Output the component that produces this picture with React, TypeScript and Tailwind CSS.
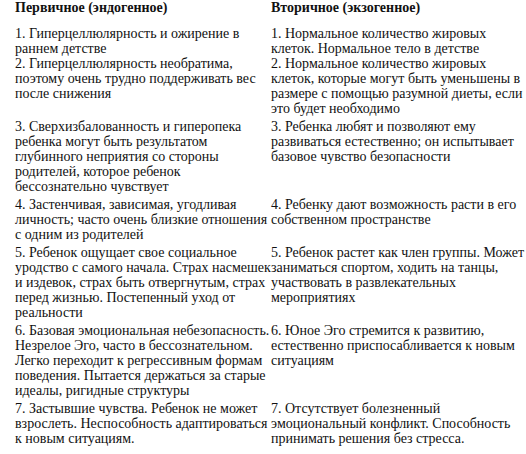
import React from "react";

type Row = { left: string[]; right: string[] };

const rows: Row[] = [
  {
    left: [
      "1. Гиперцеллюлярность и ожирение в",
      "раннем детстве",
      "2. Гиперцеллюлярность необратима,",
      "поэтому очень трудно поддерживать вес",
      "после снижения",
    ],
    right: [
      "1. Нормальное количество жировых",
      "клеток. Нормальное тело в детстве",
      "2. Нормальное количество жировых",
      "клеток, которые могут быть уменьшены в",
      "размере с помощью разумной диеты, если",
      "это будет необходимо",
    ],
  },
  {
    left: [
      "3. Сверхизбалованность и гиперопека",
      "ребенка могут быть результатом",
      "глубинного неприятия со стороны",
      "родителей, которое ребенок",
      "бессознательно чувствует",
    ],
    right: [
      "3. Ребенка любят и позволяют ему",
      "развиваться естественно; он испытывает",
      "базовое чувство безопасности",
    ],
  },
  {
    left: [
      "4. Застенчивая, зависимая, угодливая",
      "личность; часто очень близкие отношения",
      "с одним из родителей",
    ],
    right: [
      "4. Ребенку дают возможность расти в его",
      "собственном пространстве",
    ],
  },
  {
    left: [
      "5. Ребенок ощущает свое социальное",
      "уродство с самого начала. Страх насмешек",
      "и издевок, страх быть отвергнутым, страх",
      "перед жизнью. Постепенный уход от",
      "реальности",
    ],
    right: [
      "5. Ребенок растет как член группы. Может",
      "заниматься спортом, ходить на танцы,",
      "участвовать в развлекательных",
      "мероприятиях",
    ],
  },
  {
    left: [
      "6. Базовая эмоциональная небезопасность.",
      "Незрелое Эго, часто в бессознательном.",
      "Легко переходит к регрессивным формам",
      "поведения. Пытается держаться за старые",
      "идеалы, ригидные структуры",
    ],
    right: [
      "6. Юное Эго стремится к развитию,",
      "естественно приспосабливается к новым",
      "ситуациям",
    ],
  },
  {
    left: [
      "7. Застывшие чувства. Ребенок не может",
      "взрослеть. Неспособность адаптироваться",
      "к новым ситуациям.",
    ],
    right: [
      "7. Отсутствует болезненный",
      "эмоциональный конфликт. Способность",
      "принимать решения без стресса.",
    ],
  },
];

function Cell({ lines }: { lines: string[] }) {
  return (
    <div className="flex flex-col">
      {lines.map((l, i) => (
        <span key={i} className="whitespace-nowrap">
          {l}
        </span>
      ))}
    </div>
  );
}

export default function App() {
  return (
    <div className="w-[526px] h-[454px] overflow-hidden bg-white text-[#111111] text-[14px] leading-[15px] pl-[15px] font-['Liberation_Serif']">
      <div className="grid grid-cols-[256px_255px] font-bold pb-[9px]">
        <div>Первичное (эндогенное)</div>
        <div>Вторичное (экзогенное)</div>
      </div>
      {rows.map((r, i) => (
        <div key={i} className="grid grid-cols-[256px_255px] py-[1.5px]">
          <Cell lines={r.left} />
          <Cell lines={r.right} />
        </div>
      ))}
    </div>
  );
}
